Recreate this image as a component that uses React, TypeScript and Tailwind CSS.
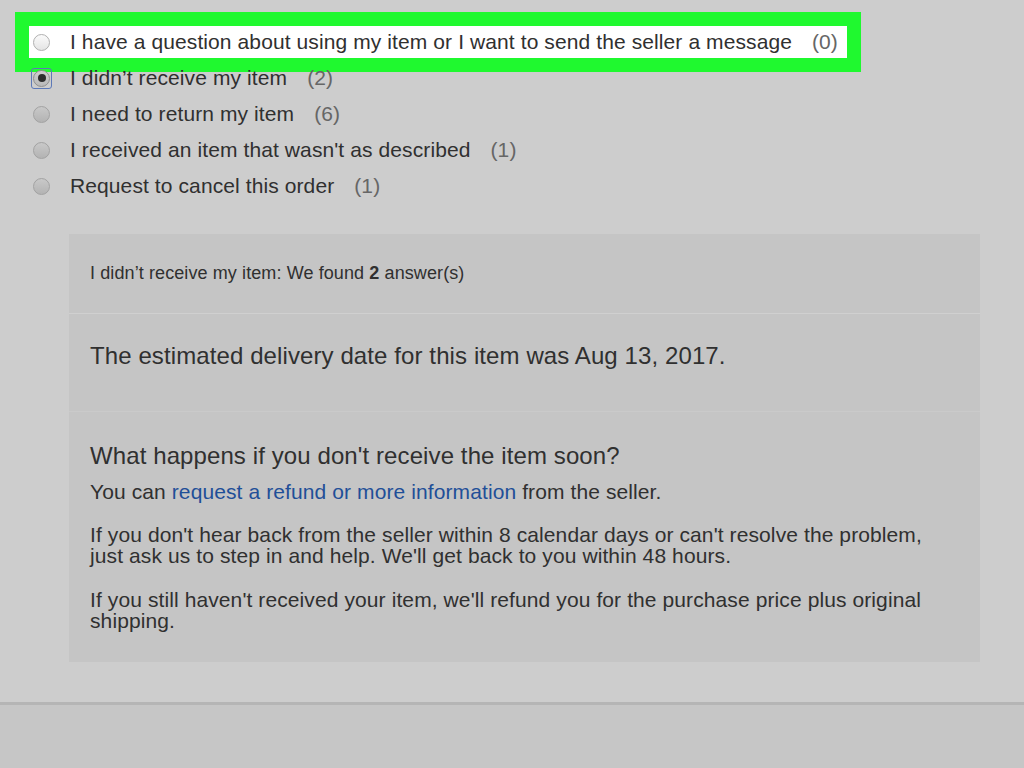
import React from "react";

function Radio({ variant }: { variant: "light" | "dim" | "checked" }) {
  if (variant === "light") {
    return (
      <span className="block w-[17px] h-[17px] rounded-full border border-[#b0b0b0] bg-gradient-to-b from-[#fbfbfb] to-[#e4e4e4] shrink-0" />
    );
  }
  if (variant === "checked") {
    return (
      <span className="relative block w-[17px] h-[17px] shrink-0">
        <span className="absolute -left-[2px] -top-[2px] w-[21px] h-[21px] rounded-[3px] border-[1.5px] border-[#5d79b8]" />
        <span className="absolute inset-0 rounded-full border border-[#8f8f8f] bg-gradient-to-b from-[#d0d0d0] to-[#b9b9b9] flex items-center justify-center">
          <span className="block w-[8px] h-[8px] rounded-full bg-[#2e2e2e]" />
        </span>
      </span>
    );
  }
  return (
    <span className="block w-[17px] h-[17px] rounded-full border border-[#a2a2a2] bg-gradient-to-b from-[#c9c9c9] to-[#b3b3b3] shrink-0" />
  );
}

function Row({
  label,
  count,
  variant,
}: {
  label: string;
  count: string;
  variant: "light" | "dim" | "checked";
}) {
  return (
    <div className="relative z-20 flex items-center h-[36px]">
      <Radio variant={variant} />
      <span className="ml-[20px] text-[21px] leading-[24px] text-[#303030] whitespace-nowrap">
        {label}
      </span>
      <span className="ml-[20px] text-[21px] leading-[24px] text-[#666666] whitespace-nowrap">
        {count}
      </span>
    </div>
  );
}

export default function App() {
  return (
    <div className="h-[768px] w-[1024px] overflow-hidden bg-[#cdcdcd] flex flex-col tracking-[0.1px] font-['Liberation_Sans',Arial,sans-serif]">
      <div className="pt-[24px] pl-[33px]">
        <div className="relative">
          <div className="absolute z-10 -left-[18px] -top-[12px] w-[846px] h-[60px] border-[14px] border-[#1ff92f] bg-white" />
          <Row
            label="I have a question about using my item or I want to send the seller a message"
            count="(0)"
            variant="light"
          />
        </div>
        <Row label="I didn’t receive my item" count="(2)" variant="checked" />
        <Row label="I need to return my item" count="(6)" variant="dim" />
        <Row
          label="I received an item that wasn't as described"
          count="(1)"
          variant="dim"
        />
        <Row label="Request to cancel this order" count="(1)" variant="dim" />
      </div>

      <div className="mt-[30px] ml-[69px] w-[911px] bg-[#c5c5c5] text-[#303030]">
        <div className="px-[21px] pt-[28px] pb-[29px] border-b border-[#d0d0d0]">
          <p className="text-[18px] leading-[22px]">
            I didn’t receive my item: We found <span className="font-bold">2</span>{" "}
            answer(s)
          </p>
        </div>
        <div className="px-[21px] pt-[28px] pb-[41px] border-b border-[#cacaca]">
          <p className="text-[24px] leading-[28px]">
            The estimated delivery date for this item was Aug 13, 2017.
          </p>
        </div>
        <div className="px-[21px] pt-[30px] pb-[31px]">
          <h2 className="text-[24px] leading-[28px]">
            What happens if you don't receive the item soon?
          </h2>
          <p className="mt-[11px] text-[21px] leading-[21px] whitespace-nowrap">
            You can{" "}
            <span className="text-[#1f4f98]">request a refund or more information</span>{" "}
            from the seller.
          </p>
          <p className="mt-[22px] text-[21px] leading-[21px] whitespace-nowrap">
            If you don't hear back from the seller within 8 calendar days or can't resolve the problem,
            <br />
            just ask us to step in and help. We'll get back to you within 48 hours.
          </p>
          <p className="mt-[23px] text-[21px] leading-[21px] whitespace-nowrap">
            If you still haven't received your item, we'll refund you for the purchase price plus original
            <br />
            shipping.
          </p>
        </div>
      </div>

      <div className="mt-[40px] flex-1 border-t-[3px] border-[#b5b5b5] bg-[#c6c6c6]" />
    </div>
  );
}
